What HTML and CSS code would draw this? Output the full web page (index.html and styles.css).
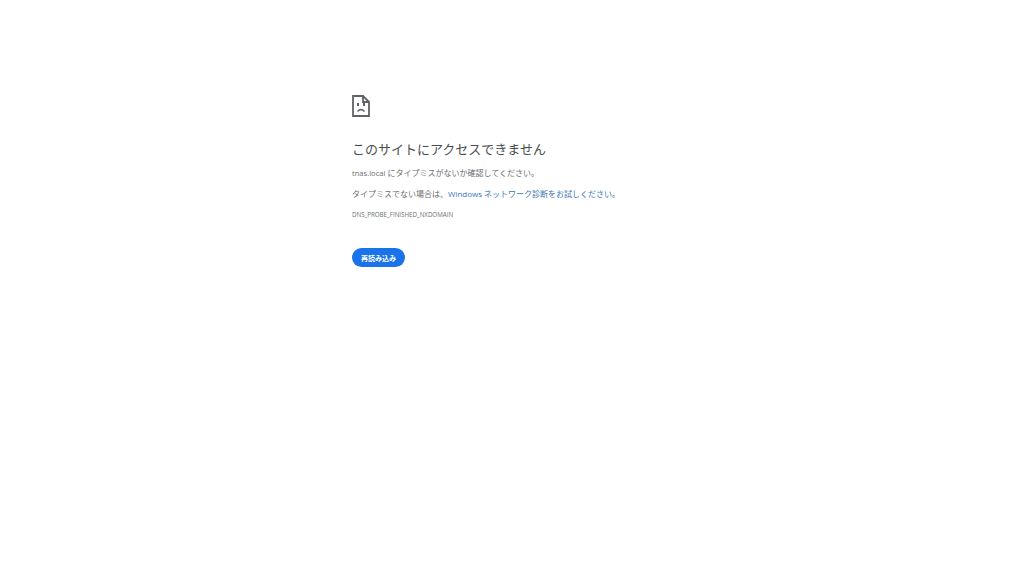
FILE: index.html
```html
<!DOCTYPE html>
<html lang="ja">
<head>
<meta charset="utf-8">
<title>tnas.local</title>
<link rel="stylesheet" href="styles.css">
</head>
<body>
<main class="page">
<svg class="icon" viewBox="0 0 18 22" width="18" height="22" aria-hidden="true">
<path class="line" d="M1 1H11V7H17V21H1Z"/>
<path class="line" d="M11 1L17 7"/>
<rect class="fill" x="5" y="8" width="2" height="3"/>
<rect class="fill" x="11" y="8" width="2" height="3"/>
<path class="line thin" d="M5.5 16.5Q9 12.5 12.5 16.5"/>
</svg>
<h1 class="title">このサイトにアクセスできません</h1>
<p class="line-one"><span class="host">tnas.local</span> にタイプミスがないか確認してください。</p>
<p class="line-two">タイプミスでない場合は、<a class="link" href="#">Windows ネットワーク診断をお試しください</a>。</p>
<p class="code">DNS_PROBE_FINISHED_NXDOMAIN</p>
<button class="reload" type="button">再読み込み</button>
</main>
</body>
</html>
```
FILE: styles.css
```css
html, body {
  margin: 0;
  padding: 0;
  background: #fff;
}
body {
  font-family: "Open Sans", "Noto Sans CJK JP", sans-serif;
  color: #6a6e72;
}
.page {
  display: flex;
  flex-direction: column;
  align-items: flex-start;
  padding: 95px 0 0 352px;
}
.icon {
  display: block;
  margin-bottom: 22px;
}
.line {
  fill: none;
  stroke: #5f6368;
  stroke-width: 1.8;
}
.thin {
  stroke-width: 1.4;
}
.fill {
  fill: #5f6368;
}
.title {
  margin: 0;
  font-size: 13px;
  line-height: 20px;
  font-weight: 400;
  color: #4a4d50;
}
.line-one, .line-two {
  margin: 0;
  font-size: 8px;
  line-height: 13px;
}
.line-one { margin-top: 7px; }
.line-two { margin-top: 7px; }
.host {
  font-size: 7.6px;
}
.link {
  color: #3a77b8;
  text-decoration: none;
}
.code {
  margin: 10px 0 0;
  font-size: 6.2px;
  line-height: 10px;
}
.reload {
  margin-top: 28px;
  width: 53px;
  height: 19px;
  padding: 0;
  border: 0;
  border-radius: 10px;
  background: #1a73e8;
  color: #fff;
  font-family: inherit;
  font-size: 7px;
  font-weight: 600;
}
```
